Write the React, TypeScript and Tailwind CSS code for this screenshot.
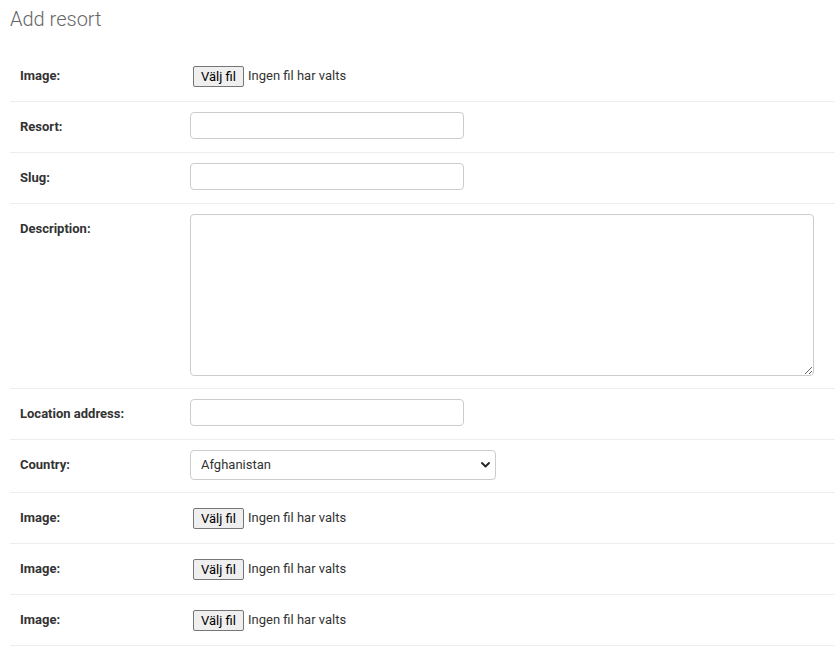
import React from 'react';

const FileField = () => (
  <div className="flex h-[30px] items-center">
    <button
      type="button"
      className="ml-[3px] h-[21px] w-[51px] rounded-[2px] border border-[#767676] bg-[#efefef] text-[13px] leading-none text-black"
    >
      Välj fil
    </button>
    <span className="ml-[4px] text-[13px] text-[#333]">Ingen fil har valts</span>
  </div>
);

const Row = ({ label, children }: { label: string; children: React.ReactNode }) => (
  <div className="flex items-start border-b border-[#eee] py-[10px] pl-[10px]">
    <label className="w-[170px] shrink-0 pr-[10px] text-[13px] font-bold leading-[30px] text-[#333]">
      {label}
    </label>
    <div>{children}</div>
  </div>
);

const TextInput = () => (
  <input
    type="text"
    className="block h-[27px] w-[274px] rounded-[4px] border border-[#ccc] bg-white px-[6px] text-[13px] text-[#333] outline-none"
  />
);

export default function App() {
  return (
    <div className="min-h-screen bg-white pl-[10px] font-['Roboto','Lucida_Grande','DejaVu_Sans',sans-serif]">
      <h1 className="mb-[20px] pt-[7px] text-[20px] font-light leading-[24px] text-[#666]">Add resort</h1>

      <Row label="Image:">
        <FileField />
      </Row>
      <Row label="Resort:">
        <TextInput />
      </Row>
      <Row label="Slug:">
        <TextInput />
      </Row>
      <Row label="Description:">
        <textarea className="mb-[2px] block h-[162px] w-[624px] rounded-[4px] border border-[#ccc] bg-white px-[6px] py-[5px] text-[13px] text-[#333] outline-none" />
      </Row>
      <Row label="Location address:">
        <TextInput />
      </Row>
      <Row label="Country:">
        <div className="relative mb-[2px] w-[306px]">
          <select className="block h-[30px] w-full appearance-none rounded-[4px] border border-[#ccc] bg-white pl-[10px] text-[13px] text-[#333] outline-none">
            <option>Afghanistan</option>
          </select>
          <svg
            className="pointer-events-none absolute right-[6px] top-[12px]"
            width="9"
            height="6"
            viewBox="0 0 9 6"
            fill="none"
          >
            <path d="M1 1l3.5 3.5L8 1" stroke="#222" strokeWidth="1.8" strokeLinecap="round" strokeLinejoin="round" />
          </svg>
        </div>
      </Row>
      <Row label="Image:">
        <FileField />
      </Row>
      <Row label="Image:">
        <FileField />
      </Row>
      <Row label="Image:">
        <FileField />
      </Row>
    </div>
  );
}
